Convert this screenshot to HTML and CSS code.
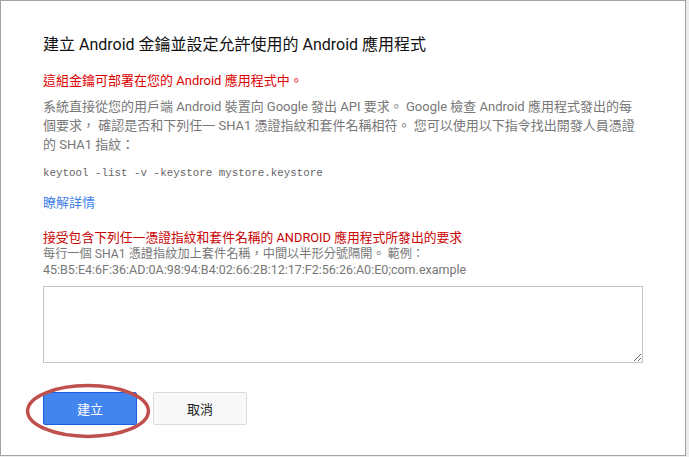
FILE: index.html
```html
<!DOCTYPE html>
<html lang="zh-Hant">
<head>
<meta charset="utf-8">
<title>建立 Android 金鑰</title>
<link rel="stylesheet" href="styles.css">
</head>
<body>
<div class="dialog">
  <h1 class="title">建立 Android 金鑰並設定允許使用的 Android 應用程式</h1>
  <p class="warn">這組金鑰可部署在您的 Android 應用程式中。</p>
  <p class="desc">系統直接從您的用戶端 Android 裝置向 Google 發出 API 要求。 Google 檢查 Android 應用程式發出的每個要求， 確認是否和下列任一 SHA1 憑證指紋和套件名稱相符。 您可以使用以下指令找出開發人員憑證的 SHA1 指紋：</p>
  <p class="code">keytool -list -v -keystore mystore.keystore</p>
  <a class="link" href="#">瞭解詳情</a>
  <div class="field">
    <div class="field-label">接受包含下列任一憑證指紋和套件名稱的 ANDROID 應用程式所發出的要求</div>
    <div class="field-hint">每行一個 SHA1 憑證指紋加上套件名稱，中間以半形分號隔開。 範例：</div>
    <div class="field-hint example">45:B5:E4:6F:36:AD:0A:98:94:B4:02:66:2B:12:17:F2:56:26:A0:E0;com.example</div>
    <textarea class="input"></textarea>
  </div>
  <div class="actions">
    <button class="btn btn-primary">建立</button>
    <button class="btn btn-cancel">取消</button>
    <svg class="highlight" width="128" height="58" viewBox="0 0 128 58" aria-hidden="true">
      <ellipse cx="64" cy="29" rx="60.4" ry="25.4" fill="none" stroke="#c0504d" stroke-width="3.5"/>
    </svg>
  </div>
</div>
</body>
</html>
```

FILE: styles.css
```css
html, body {
  margin: 0;
  padding: 0;
}
body {
  background: #ececec;
  width: 689px;
  height: 457px;
  overflow: hidden;
  font-family: Roboto, "Noto Sans CJK TC", sans-serif;
}
.dialog {
  box-sizing: border-box;
  width: 686px;
  height: 456px;
  background: #fff;
  border: 1px solid #a3a3a3;
  padding: 34px 42px 0 42px;
}
.title {
  margin: 0;
  font-size: 16px;
  font-weight: normal;
  line-height: 20px;
  color: #111;
}
.warn {
  margin: 16px 0 0 0;
  font-size: 13px;
  line-height: 19px;
  color: #dd0000;
}
.desc {
  margin: 7px 0 0 0;
  font-size: 13px;
  line-height: 19px;
  color: #777;
}
.code {
  margin: 10px 0 0 0;
  font-family: "Liberation Mono", "DejaVu Sans Mono", monospace;
  font-size: 10.85px;
  line-height: 19px;
  color: #666;
}
.link {
  display: block;
  margin-top: 10px;
  font-size: 13px;
  line-height: 19px;
  color: #3f7fe8;
  text-decoration: none;
  width: max-content;
}
.field {
  margin-top: 18px;
}
.field-label {
  font-size: 12.8px;
  line-height: 16px;
  color: #c80000;
}
.field-hint {
  font-size: 12.2px;
  line-height: 16px;
  color: #777;
}
.example {
  font-size: 12.5px;
}
.input {
  display: block;
  box-sizing: border-box;
  width: 600px;
  height: 77px;
  margin-top: 8px;
  border: 1px solid #c4c4c4;
  border-radius: 0;
  padding: 4px;
  font-family: inherit;
  font-size: 13px;
  resize: both;
  outline: none;
}
.actions {
  position: relative;
  display: flex;
  gap: 16px;
  margin-top: 29px;
}
.btn {
  box-sizing: border-box;
  width: 94px;
  height: 33px;
  font-family: Roboto, "Noto Sans CJK TC", sans-serif;
  font-size: 13px;
  border-radius: 2px;
  padding: 0;
  cursor: pointer;
}
.btn-primary {
  background: #4385ee;
  border: 1px solid #1a5fe0;
  color: #fff;
}
.btn-cancel {
  background: #f8f8f8;
  border: 1px solid #dcdcdc;
  color: #222;
}
.highlight {
  position: absolute;
  left: -19px;
  top: -10px;
  pointer-events: none;
}
```
